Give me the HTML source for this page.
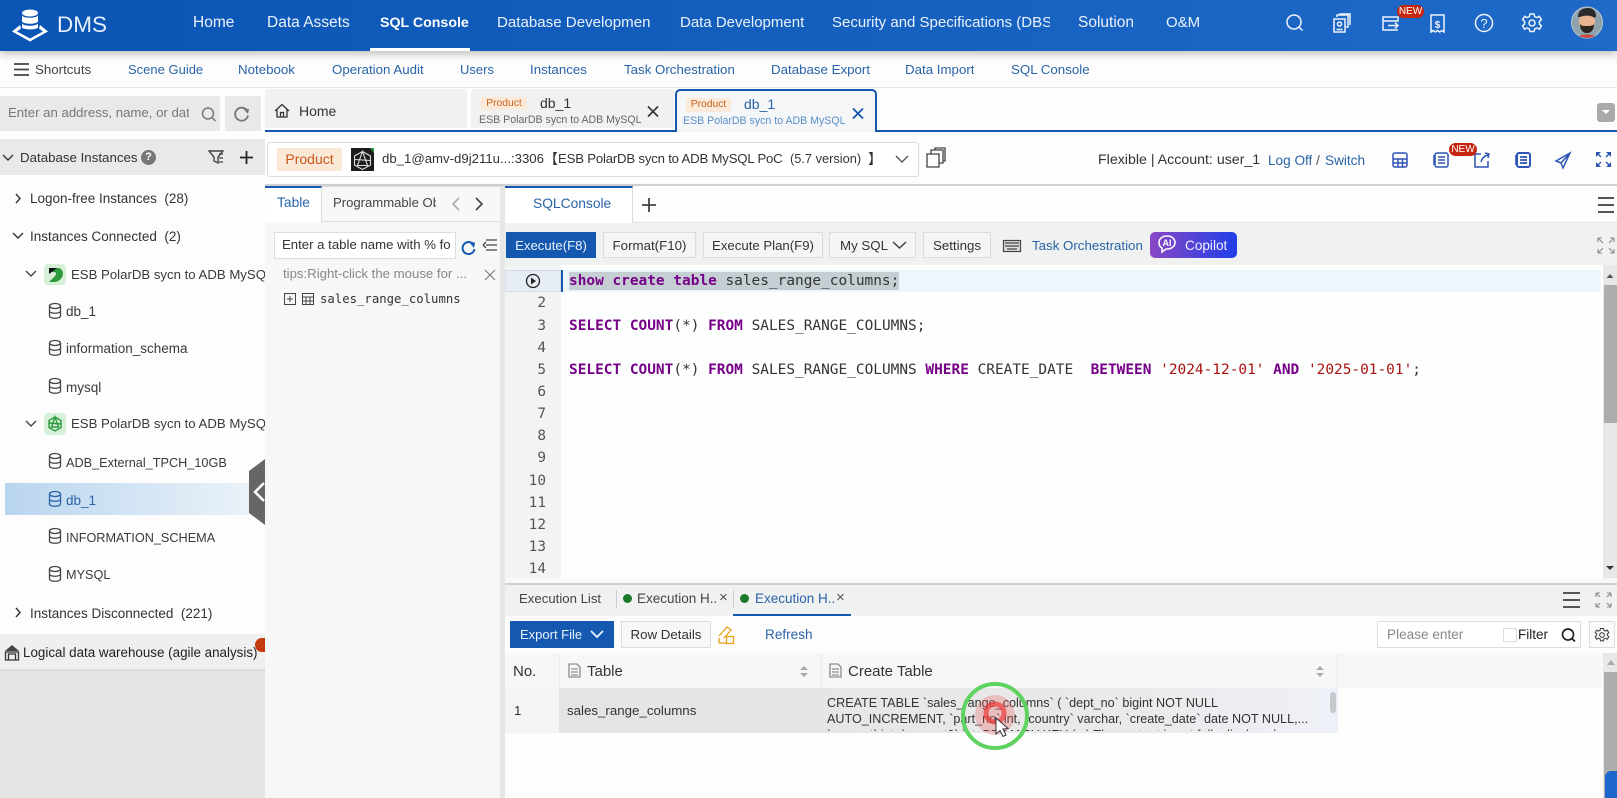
<!DOCTYPE html>
<html><head><meta charset="utf-8"><title>DMS</title>
<style>
html,body{margin:0;padding:0;width:1617px;height:798px;overflow:hidden;background:#fdfdfd;font-family:"Liberation Sans","Noto Sans CJK SC",sans-serif;color:#333}
.b{position:absolute}
.t{position:absolute;white-space:nowrap;line-height:20px;height:20px;font-size:14px;overflow:hidden}
.n{color:#eaf2fb;font-size:15.5px;top:13px}
.s{color:#2a64a8;font-size:13.3px;top:60px}
.r{font-size:13.5px;color:#3a3a3a}
.u{font-size:12.7px;color:#3a3a3a}
.btn{position:absolute;top:232px;height:24px;line-height:25px;background:#f5f5f5;border:1px solid #dcdcdc;font-size:13.3px;color:#333;text-align:center}
.ln{position:absolute;left:505px;width:41px;text-align:right;font:14.4px/22px "DejaVu Sans Mono",monospace;color:#555;height:22px}
.c{position:absolute;left:569px;white-space:pre;font:14.45px/22px "DejaVu Sans Mono",monospace;color:#333;height:22px}
.c b{color:#770088;font-weight:bold}.c i{font-style:normal;color:#a11}
</style></head><body>

<!-- header -->
<div class="b" style="left:0;top:0;width:1617px;height:51px;background:linear-gradient(90deg,#0a55b4,#1f69c8);box-shadow:0 3px 8px rgba(0,0,0,.25)"></div>
<div class="b" style="left:370px;top:48px;width:100px;height:3px;background:#fff"></div>
<div class="t" style="left:57px;top:12px;color:#e6effa;font-size:22.5px;line-height:25px;height:25px">DMS</div>
<div class="t n" style="left:193px">Home</div>
<div class="t n" style="left:267px">Data Assets</div>
<div class="t n" style="left:380px;font-weight:bold;color:#fff;font-size:14.2px">SQL Console</div>
<div class="t n" style="left:497px;width:155px;font-size:15.1px">Database Developmen</div>
<div class="t n" style="left:680px;width:126px;font-size:15px">Data Development</div>
<div class="t n" style="left:832px;width:218px;font-size:15px">Security and Specifications (DBS</div>
<div class="t n" style="left:1078px">Solution</div>
<div class="t n" style="left:1166px;font-size:15px">O&amp;M</div>
<div class="b" style="left:1397px;top:5px;width:27px;height:13px;background:#c5260f;border-radius:7px;color:#fff;font-size:10px;line-height:13px;text-align:center">NEW</div>

<!-- subnav -->
<div class="b" style="left:0;top:87px;width:1617px;height:1px;background:#e6e6e6"></div>
<div class="t" style="left:35px;top:60px;font-size:13.3px;color:#444">Shortcuts</div>
<div class="t s" style="left:128px;font-size:13px">Scene Guide</div>
<div class="t s" style="left:238px">Notebook</div>
<div class="t s" style="left:332px">Operation Audit</div>
<div class="t s" style="left:460px;font-size:13px">Users</div>
<div class="t s" style="left:530px">Instances</div>
<div class="t s" style="left:624px">Task Orchestration</div>
<div class="t s" style="left:771px">Database Export</div>
<div class="t s" style="left:905px">Data Import</div>
<div class="t s" style="left:1011px">SQL Console</div>

<!-- left search -->
<div class="b" style="left:0;top:96px;width:220px;height:35px;background:#e9e9e9"></div>
<div class="t" style="left:8px;top:103px;width:181px;color:#777;font-size:13.2px">Enter an address, name, or data</div>
<div class="b" style="left:225px;top:96px;width:36px;height:35px;background:#e9e9e9"></div>

<!-- doc tabs -->
<div class="b" style="left:265px;top:89px;width:202px;height:39px;background:#f1f1f1;border-radius:4px 4px 0 0"></div>
<div class="t" style="left:299px;top:101px;font-size:14px;color:#333">Home</div>
<div class="b" style="left:471px;top:89px;width:203px;height:39px;background:#f1f1f1;border-radius:4px 4px 0 0"></div>
<div class="b" style="left:481px;top:97px;width:46px;height:13px;background:#fbead9;color:#c9621d;font-size:10.3px;line-height:13px;text-align:center">Product</div>
<div class="t" style="left:540px;top:93px;font-size:14px;color:#333">db_1</div>
<div class="t" style="left:479px;top:110px;width:162px;font-size:10.6px;color:#666">ESB PolarDB sycn to ADB MySQL PoC</div>
<div class="b" style="left:265px;top:130px;width:1352px;height:2px;background:#1558b0"></div>
<div class="b" style="left:675px;top:89px;width:198px;height:41px;background:#f4f6f7;border:2px solid #1558b0;border-bottom:none;border-radius:5px 5px 0 0"></div>
<div class="b" style="left:686px;top:98px;width:45px;height:14px;background:#fbead9;color:#c9621d;font-size:10.3px;line-height:14px;text-align:center">Product</div>
<div class="t" style="left:744px;top:94px;font-size:14px;color:#2a64a8">db_1</div>
<div class="t" style="left:683px;top:111px;width:162px;font-size:10.6px;color:#5b8fca">ESB PolarDB sycn to ADB MySQL PoC</div>
<div class="b" style="left:1597px;top:103px;width:18px;height:19px;background:#aaa;border-radius:3px"></div>

<!-- Sidebar -->
<div class="b" style="left:0;top:139px;width:265px;height:36px;background:#e9e9e9"></div>
<div class="t" style="left:20px;top:148px;font-size:13.3px;color:#333">Database Instances</div>
<div class="b" style="left:141px;top:150px;width:15px;height:15px;border-radius:50%;background:#777;color:#fff;font-size:11px;line-height:15px;text-align:center;font-weight:bold">?</div>
<div class="t r" style="left:30px;top:189px;color:#333">Logon-free Instances&nbsp; (28)</div>
<div class="t r" style="left:30px;top:227px;color:#333">Instances Connected&nbsp; (2)</div>
<div class="t r" style="left:71px;top:265px;width:194px;font-size:13.2px">ESB PolarDB sycn to ADB MySQL PoC</div>
<div class="t r" style="left:66px;top:302px">db_1</div>
<div class="t r" style="left:66px;top:339px">information_schema</div>
<div class="t r" style="left:66px;top:378px">mysql</div>
<div class="t r" style="left:71px;top:414px;width:194px;font-size:13.2px">ESB PolarDB sycn to ADB MySQL PoC</div>
<div class="t u" style="left:66px;top:453px">ADB_External_TPCH_10GB</div>
<div class="b" style="left:5px;top:483px;width:244px;height:32px;background:linear-gradient(90deg,#b9d5ee,#eaf2f9)"></div>
<div class="t r" style="left:66px;top:491px;color:#2a64a8">db_1</div>
<div class="t u" style="left:66px;top:528px">INFORMATION_SCHEMA</div>
<div class="t u" style="left:66px;top:565px">MYSQL</div>
<div class="t r" style="left:30px;top:604px;color:#333">Instances Disconnected&nbsp; (221)</div>
<div class="b" style="left:0;top:634px;width:265px;height:37px;background:#efefef;border-bottom:2px solid #dcdcdc;box-sizing:border-box"></div>
<div class="b" style="left:0;top:671px;width:265px;height:127px;background:#e6e6e6"></div>
<div class="t" style="left:23px;top:643px;font-size:13.4px;color:#222">Logical data warehouse (agile analysis)</div>
<div class="b" style="left:255px;top:638px;width:10px;height:14px;background:#c5390f;border-radius:8px 0 0 8px"></div>

<!-- Context row -->
<div class="b" style="left:265px;top:132px;width:1352px;height:52px;background:#fdfdfd"></div>
<div class="b" style="left:267px;top:142px;width:652px;height:35px;background:#fff;border:1px solid #dcdcdc;border-radius:3px;box-sizing:border-box"></div>
<div class="b" style="left:277px;top:148px;width:65px;height:23px;background:#fbe9d7;color:#c9571a;font-size:14px;line-height:23px;text-align:center">Product</div>
<div class="b" style="left:351px;top:148px;width:23px;height:23px;background:#1c1c1c"></div>
<div class="t" style="left:382px;top:149px;font-size:13.2px;color:#333">db_1@amv-d9j211u...:3306</div>
<div class="t" style="left:544px;top:149px;font-size:14px;color:#333;font-family:'Noto Sans CJK SC',sans-serif">【</div>
<div class="t" style="left:558px;top:149px;font-size:13.2px;color:#333;letter-spacing:-.2px">ESB PolarDB sycn to ADB MySQL PoC</div>
<div class="t" style="left:790px;top:149px;font-size:12.8px;color:#333">(5.7 version)</div>
<div class="t" style="left:868px;top:149px;font-size:14px;color:#333;font-family:'Noto Sans CJK SC',sans-serif">】</div>
<div class="t" style="left:1098px;top:150px;font-size:14.2px;color:#333">Flexible | Account: user_1</div>
<div class="t" style="left:1268px;top:151px;font-size:13.6px;color:#2a64a8">Log Off</div>
<div class="t" style="left:1316px;top:150px;font-size:14px;color:#555">/</div>
<div class="t" style="left:1325px;top:151px;font-size:13.6px;color:#2a64a8">Switch</div>
<div class="b" style="left:1449px;top:143px;width:28px;height:13px;background:#c5260f;border-radius:7px;color:#fff;font-size:10px;line-height:13px;text-align:center;z-index:2">NEW</div>
<div class="b" style="left:265px;top:184px;width:1352px;height:2px;background:#cfcfcf"></div>

<!-- Middle panel -->
<div class="b" style="left:265px;top:186px;width:235px;height:612px;background:#f6f7f7"></div>
<div class="b" style="left:500px;top:186px;width:5px;height:612px;background:#e6e8e8"></div>
<div class="b" style="left:265px;top:186px;width:56px;height:34px;background:#fff;border-top:2px solid #1558b0;border-right:1px solid #ddd"></div>
<div class="b" style="left:322px;top:186px;width:178px;height:36px;background:#f8f8f8;border-top:1px solid #ddd;box-sizing:border-box"></div>
<div class="t" style="left:277px;top:193px;font-size:13.8px;color:#2a64a8">Table</div>
<div class="t" style="left:333px;top:193px;font-size:13.1px;color:#444;width:103px">Programmable Objects</div>
<div class="b" style="left:322px;top:221px;width:178px;height:1px;background:#ddd"></div>
<div class="b" style="left:274px;top:232px;width:182px;height:27px;background:#fff;border:1px solid #ddd;box-sizing:border-box"></div>
<div class="t" style="left:282px;top:235px;width:168px;font-size:13.2px;color:#333">Enter a table name with % for</div>
<div class="t" style="left:283px;top:264px;width:185px;font-size:13.2px;color:#888">tips:Right-click the mouse for ...</div>
<div class="t" style="left:320px;top:289px;font:12.3px/20px 'DejaVu Sans Mono',monospace;color:#333">sales_range_columns</div>

<!-- SQL tabs -->
<div class="b" style="left:505px;top:186px;width:1112px;height:37px;background:#fdfdfd"></div>
<div class="b" style="left:505px;top:186px;width:127px;height:35px;background:#fff;border-top:2px solid #1558b0;border-right:1px solid #ddd"></div>
<div class="t" style="left:533px;top:194px;font-size:13.8px;color:#2a64a8">SQLConsole</div>
<div class="b" style="left:633px;top:222px;width:984px;height:1px;background:#e4e4e4"></div>
<div class="b" style="left:505px;top:223px;width:1112px;height:42px;background:#f0f1f1"></div>
<div class="b" style="left:506px;top:232px;width:90px;height:26px;background:#1558b0;color:#eaf2fb;font-size:13.2px;line-height:27px;text-align:center">Execute(F8)</div>
<div class="btn" style="left:603px;width:91px">Format(F10)</div>
<div class="btn" style="left:703px;width:118px;font-size:13.2px">Execute Plan(F9)</div>
<div class="btn" style="left:829px;width:85px;text-align:left;text-indent:10px">My SQL</div>
<div class="btn" style="left:923px;width:66px">Settings</div>
<div class="t" style="left:1032px;top:236px;font-size:13.3px;color:#2a64a8">Task Orchestration</div>
<div class="b" style="left:1150px;top:232px;width:87px;height:26px;background:linear-gradient(90deg,#8a47c5,#1f3fe8);border-radius:5px"></div>
<div class="t" style="left:1185px;top:236px;font-size:13.6px;color:#f0f0ff">Copilot</div>

<!-- Editor -->
<div class="b" style="left:505px;top:265px;width:1098px;height:313px;background:#fdfefe"></div>
<div class="b" style="left:505px;top:265px;width:56px;height:313px;background:#f2f3f3"></div>
<div class="b" style="left:505px;top:270px;width:56px;height:22px;background:#e6edf5;border:1px solid #d6dbe3;box-sizing:border-box"></div>
<div class="b" style="left:561px;top:270px;width:2px;height:22px;background:#1558b0"></div>
<div class="b" style="left:563px;top:270px;width:1038px;height:22px;background:#edf6fb"></div>
<div class="b" style="left:569px;top:272px;width:330px;height:18px;background:#c4ced3"></div>
<div class="ln" style="top:292px">2</div><div class="ln" style="top:315px">3</div><div class="ln" style="top:337px">4</div><div class="ln" style="top:359px">5</div><div class="ln" style="top:381px">6</div><div class="ln" style="top:403px">7</div><div class="ln" style="top:425px">8</div><div class="ln" style="top:447px">9</div><div class="ln" style="top:470px">10</div><div class="ln" style="top:492px">11</div><div class="ln" style="top:514px">12</div><div class="ln" style="top:536px">13</div><div class="ln" style="top:558px">14</div>
<div class="c" style="top:270px"><b>show create table</b> sales_range_columns;</div>
<div class="c" style="top:315px"><b>SELECT COUNT</b>(*) <b>FROM</b> SALES_RANGE_COLUMNS;</div>
<div class="c" style="top:359px"><b>SELECT COUNT</b>(*) <b>FROM</b> SALES_RANGE_COLUMNS <b>WHERE</b> CREATE_DATE  <b>BETWEEN</b> <i>'2024-12-01'</i> <b>AND</b> <i>'2025-01-01'</i>;</div>
<div class="b" style="left:1603px;top:265px;width:14px;height:313px;background:#e8e8e8"></div>
<div class="b" style="left:1604px;top:285px;width:13px;height:138px;background:#adadad"></div>
<div class="b" style="left:505px;top:578px;width:1112px;height:5px;background:#f8f8f8"></div>
<div class="b" style="left:505px;top:583px;width:1112px;height:2px;background:#cfcfcf"></div>

<!-- Result panel -->
<div class="b" style="left:505px;top:585px;width:1112px;height:31px;background:#f0f1f1"></div>
<div class="t" style="left:519px;top:589px;font-size:13.2px;color:#444">Execution List</div>
<div class="b" style="left:616px;top:590px;width:1px;height:18px;background:#ccc"></div>
<div class="b" style="left:623px;top:594px;width:9px;height:9px;border-radius:50%;background:#1a7a2a"></div>
<div class="t" style="left:637px;top:589px;font-size:13.5px;color:#444;width:80px">Execution H...</div>
<div class="t" style="left:719px;top:588px;font-size:15px;color:#555">×</div>
<div class="b" style="left:733px;top:590px;width:1px;height:18px;background:#ccc"></div>
<div class="b" style="left:740px;top:594px;width:9px;height:9px;border-radius:50%;background:#1a7a2a"></div>
<div class="t" style="left:755px;top:589px;font-size:13.5px;color:#2a64a8;width:80px">Execution H...</div>
<div class="t" style="left:836px;top:588px;font-size:15px;color:#555">×</div>
<div class="b" style="left:733px;top:614px;width:118px;height:2px;background:#1558b0"></div>

<div class="b" style="left:510px;top:621px;width:104px;height:27px;background:#1558b0"></div>
<div class="t" style="left:520px;top:625px;font-size:13px;color:#eaf2fb">Export File</div>
<div class="b" style="left:621px;top:621px;width:90px;height:27px;background:#f8f8f8;border:1px solid #ddd;box-sizing:border-box;font-size:13.3px;line-height:26px;text-align:center;color:#333">Row Details</div>
<div class="t" style="left:765px;top:625px;font-size:13.6px;color:#2a64a8">Refresh</div>
<div class="b" style="left:1377px;top:621px;width:204px;height:27px;background:#fff;border:1px solid #ddd;box-sizing:border-box"></div>
<div class="t" style="left:1387px;top:625px;font-size:13.6px;color:#888">Please enter</div>
<div class="b" style="left:1503px;top:628px;width:14px;height:14px;background:#fff;border:1px solid #ddd;box-sizing:border-box"></div>
<div class="t" style="left:1518px;top:625px;font-size:13.5px;color:#222">Filter</div>
<div class="b" style="left:1589px;top:621px;width:26px;height:27px;background:#fafafa;border:1px solid #ddd;box-sizing:border-box"></div>

<div class="b" style="left:505px;top:653px;width:1098px;height:35px;background:#f7f7f7"></div>
<div class="b" style="left:559px;top:653px;width:1px;height:35px;background:#ececec"></div>
<div class="b" style="left:821px;top:653px;width:1px;height:35px;background:#ececec"></div>
<div class="b" style="left:1337px;top:653px;width:1px;height:35px;background:#ececec"></div>
<div class="t" style="left:513px;top:662px;font-size:15px;color:#333">No.</div>
<div class="t" style="left:587px;top:662px;font-size:15px;color:#333">Table</div>
<div class="t" style="left:848px;top:662px;font-size:15px;color:#333">Create Table</div>
<div class="b" style="left:505px;top:688px;width:54px;height:45px;background:#f4f4f4"></div>
<div class="b" style="left:559px;top:688px;width:779px;height:45px;background:linear-gradient(90deg,#e3e4e4,#e9e9e9 70%,#eff1f8)"></div>
<div class="t" style="left:514px;top:701px;font-size:13.3px;color:#333">1</div>
<div class="t" style="left:567px;top:701px;font-size:13.3px;color:#333">sales_range_columns</div>
<div class="b" style="left:827px;top:695px;width:490px;height:36px;overflow:hidden;font-size:12.6px;line-height:16px;color:#333;white-space:nowrap">CREATE TABLE `sales_range_columns` ( `dept_no` bigint NOT NULL<br>AUTO_INCREMENT, `part_no` int, `country` varchar, `create_date` date NOT NULL,...<br>`amount` int, `amount2` int, PRIMARY KEY (...) The content is not fully displayed...</div>
<div class="b" style="left:1330px;top:692px;width:6px;height:21px;background:#c5c8cc;border-radius:3px"></div>
<div class="b" style="left:1603px;top:653px;width:14px;height:145px;background:#e8e8e8"></div>
<div class="b" style="left:1604px;top:672px;width:13px;height:126px;background:#adadad"></div>
<div class="b" style="left:1605px;top:771px;width:12px;height:27px;background:#1c66cc;border-radius:6px 0 0 0"></div>

<!-- Icons overlay -->
<svg class="b" style="left:0;top:0;z-index:1" width="1617" height="798" viewBox="0 0 1617 798" fill="none">
<!-- logo -->
<g fill="#fff">
<ellipse cx="30" cy="13" rx="8" ry="3.500"/>
<path d="M22 15.500c2 3 14 3 16 0v6c-2 3-14 3-16 0zM22 23.500c2 3 14 3 16 0v4c-2 2.500-14 2.500-16 0z"/>
<path d="M20 25l-8 6.500 18 10 18-10-8-6.500-1 3.500 4 3-13 7-13-7 4-3z"/>
</g>
<!-- header icons -->
<g stroke="#eef4fb" stroke-width="1.500">
<circle cx="1294" cy="22" r="7"/><path d="M1299 27l3.500 3.500"/>
<rect x="1334" y="19" width="11" height="13"/><path d="M1337 17v-2h11v12h-2M1340 15.500v-1.500h10v11"/><circle cx="1339.500" cy="24" r="2"/><path d="M1336.500 29.500h6"/>
<path d="M1383 17h15v4h-15zM1383 17v13h15M1388 25.500h10M1395 22.500l3 3-3 3"/>
<path d="M1431 15h13v17l-2.200-1.500-2.100 1.500-2.200-1.500-2.200 1.500-2.100-1.500-2.200 1.500z"/>
<circle cx="1484" cy="23" r="8.500"/>
<circle cx="1532" cy="23" r="3"/>
<path d="M1530 14h4l.7 2.600 2.300 1 2.400-1.300 2 3.400-2 1.800v2.500l2 1.800-2 3.400-2.400-1.300-2.300 1-.7 2.600h-4l-.7-2.600-2.300-1-2.400 1.300-2-3.400 2-1.800v-2.500l-2-1.800 2-3.400 2.400 1.300 2.300-1z"/>
</g>
<text x="1437.500" y="28" fill="#eef4fb" font-size="10" font-weight="bold" text-anchor="middle" font-family="Liberation Sans">$</text>
<text x="1484" y="28" fill="#eef4fb" font-size="13" text-anchor="middle" font-family="Liberation Sans">?</text>
<!-- avatar -->
<circle cx="1587" cy="22.500" r="15.500" fill="#8fa3ad" stroke="#b9c6cf" stroke-width="1"/>
<ellipse cx="1587" cy="21" rx="8" ry="9" fill="#e6b48e"/>
<path d="M1578 17c0-6 4-9 10-9 5 0 8 3 8 8l-1 2c-4-3-10-3-15-1z" fill="#2a2a2a"/>
<path d="M1580 24c1 2 4 2 7 2s6 0 7-2c0 6-3 9-7 9s-7-3-7-9z" fill="#2b241f"/>
<path d="M1579 36c4-2 12-2 16 0-4 2.500-12 2.500-16 0z" fill="#c9453f"/>
<!-- shortcuts hamburger -->
<path d="M14 64h15M14 69.500h15M14 75h15" stroke="#444" stroke-width="1.800"/>
<!-- left search icons -->
<circle cx="208" cy="113.500" r="5.500" stroke="#777" stroke-width="1.500"/><path d="M212 117.500l3.500 3.500" stroke="#777" stroke-width="1.500"/>
<path d="M247 110.500a6.500 6.500 0 1 0 1 5" stroke="#777" stroke-width="1.800"/><path d="M243 108.500l6 .5-1 5z" fill="#777"/>
<!-- home icon -->
<path d="M275 111l7-6.500 7 6.500M277 109.500v7.500h10v-7.500M280.500 117v-4.500h3v4.500" stroke="#333" stroke-width="1.300"/>
<!-- tab x -->
<path d="M648 106.500l10 10M658 106.500l-10 10" stroke="#333" stroke-width="1.600"/>
<path d="M853 108.500l10 10M863 108.500l-10 10" stroke="#1558b0" stroke-width="1.800"/>
<path d="M1602 110h8l-4 4z" fill="#fff"/>
<!-- sidebar icons -->
<path d="M3 155l5 5 5-5" stroke="#333" stroke-width="1.400"/>
<path d="M16 194l4 4.500-4 4.500" stroke="#333" stroke-width="1.400"/>
<path d="M209 151h14l-5 6v6l-4-2v-4z" stroke="#444" stroke-width="1.400"/><path d="M219 154h4M219 158h4M219 162h4" stroke="#444" stroke-width="1.200"/>
<path d="M246.500 151v13M240 157.500h13" stroke="#222" stroke-width="1.800"/>
<path d="M13 233l5 5 5-5" stroke="#333" stroke-width="1.400"/>
<path d="M26 271l5 5 5-5M26 421l5 5 5-5" stroke="#444" stroke-width="1.400"/>
<path d="M16 608l4 4.500-4 4.500" stroke="#333" stroke-width="1.400"/>
<rect x="44" y="264" width="22" height="21" rx="4" fill="#d8efd8"/>
<path d="M49 268h9c3 0 5 3 5 5 0 6-5 9-9 9h-5l6-6c2-2 1-4-1-4h-5z" fill="#2c9a3c"/><path d="M49 268h8l-8 6z" fill="#111"/>
<rect x="44" y="413" width="22" height="22" rx="4" fill="#d8efd8"/>
<path d="M55 417l6 3.500v7l-6 3.500-6-3.500v-7zM55 417l-3.500 10h7zM49 423l12 1" stroke="#2c9a3c" stroke-width="1.400"/>
<g stroke="#444" stroke-width="1.300">
<ellipse cx="55" cy="306" rx="5.500" ry="2.500"/><path d="M49.500 306v10c0 3 11 3 11 0v-10M49.500 311c0 3 11 3 11 0"/>
<ellipse cx="55" cy="343" rx="5.500" ry="2.500"/><path d="M49.500 343v10c0 3 11 3 11 0v-10M49.500 348c0 3 11 3 11 0"/>
<ellipse cx="55" cy="381" rx="5.500" ry="2.500"/><path d="M49.500 381v10c0 3 11 3 11 0v-10M49.500 386c0 3 11 3 11 0"/>
<ellipse cx="55" cy="456" rx="5.500" ry="2.500"/><path d="M49.500 456v10c0 3 11 3 11 0v-10M49.500 461c0 3 11 3 11 0"/>
<ellipse cx="55" cy="531" rx="5.500" ry="2.500"/><path d="M49.500 531v10c0 3 11 3 11 0v-10M49.500 536c0 3 11 3 11 0"/>
<ellipse cx="55" cy="569" rx="5.500" ry="2.500"/><path d="M49.500 569v10c0 3 11 3 11 0v-10M49.500 574c0 3 11 3 11 0"/>
</g>
<g stroke="#2a64a8" stroke-width="1.300"><ellipse cx="55" cy="494" rx="5.500" ry="2.500"/><path d="M49.500 494v10c0 3 11 3 11 0v-10M49.500 499c0 3 11 3 11 0"/></g>
<!-- collapse handle -->
<path d="M265 459v66l-16-12v-42z" fill="#666"/><path d="M264 483l-9 9 9 9" stroke="#fff" stroke-width="2.500"/>
<!-- warehouse icon -->
<path d="M5.500 652h13v8h-13zM8.500 654h7v6h-7z" stroke="#333" stroke-width="1.300"/><path d="M5 651l7-6 7 6z" fill="#444"/>
<!-- context icons -->
<path d="M362.500 151.500l8 4.500v9l-8 4.500-8-4.500v-9zM362.500 151.500l-5 14h10zM355 159.500l15 1" stroke="#ddd" stroke-width="1.100"/>
<path d="M370 148h4v5z" fill="#2c9a3c"/>
<path d="M896 156l6 6 6-6" stroke="#555" stroke-width="1.400"/>
<path d="M927 154h12v13h-12zM931 154v-4h12v13h-4M935 150v-2h10v13h-2" stroke="#444" stroke-width="1.300"/>
<g stroke="#2f55b5" stroke-width="1.500">
<rect x="1393" y="153" width="14" height="14" rx="2"/><path d="M1393 159h14M1393 163h14M1398 159v8M1402.500 159v8"/>
<rect x="1435" y="153" width="13" height="14" rx="2"/><path d="M1438 157h7M1438 160h7M1438 163h7M1434 155v10"/>
<path d="M1481 154h-6v13h13v-6M1481 162c1-4 3-6 7-7M1485 153l4 1-1 4"/>
<rect x="1517" y="153" width="13" height="14" rx="2" stroke-width="2"/><path d="M1520 157h7M1520 160h7M1520 163h7M1516 155v10" stroke-width="1.700"/>
<path d="M1570 153l-14 8 5 2 2 5 7-15zM1561 163l9-10"/>
</g>
<g fill="#2f55b5"><path d="M1596 152h5l-5 5zM1611 152h-5l5 5zM1596 167h5l-5-5zM1611 167h-5l5-5z"/></g>
<path d="M1598 154l3 3M1609 154l-3 3M1598 165l3-3M1609 165l-3-3" stroke="#2f55b5" stroke-width="1.400"/>
<!-- mid tabs -->
<path d="M459 198l-6 6 6 6" stroke="#aaa" stroke-width="1.600"/><path d="M476 198l6 6-6 6" stroke="#444" stroke-width="1.600"/>
<path d="M649 198v14M642 205h14" stroke="#444" stroke-width="1.800"/>
<path d="M1598 198h16M1598 205h16M1598 212h16" stroke="#555" stroke-width="2"/>
<!-- table refresh/list -->
<path d="M473 244a6 6 0 1 0 1.500 5" stroke="#1558b0" stroke-width="2"/><path d="M469 242l6 .5-1 5.500z" fill="#1558b0"/>
<path d="M486 240h11M486 245h11M486 250h11M483 245l3-3M483 245l3 3" stroke="#444" stroke-width="1.300"/>
<path d="M485 270l10 10M495 270l-10 10" stroke="#777" stroke-width="1.100"/>
<!-- tree -->
<rect x="284.500" y="293.500" width="11" height="11" stroke="#444"/><path d="M287 299h6M290 296v6" stroke="#444"/>
<rect x="302.500" y="293.500" width="11" height="11" stroke="#444"/><path d="M302.500 297h11M302.500 301h11M306 297v7M310 297v7" stroke="#444"/>
<!-- toolbar icons -->
<path d="M893 242l6.500 6 6.500-6" stroke="#444" stroke-width="1.500"/>
<rect x="1003.500" y="240.500" width="17" height="11" stroke="#444" stroke-width="1.200" fill="#ddd"/><path d="M1005 243h14M1005 246h14M1007 249h10" stroke="#444" stroke-width="1.200"/>
<path d="M1167 236c5 0 8 3 8 6.500s-3 6.500-8 6.500h-1l-4 3v-4c-2-1-3-3-3-5.500 0-3.500 3-6.500 8-6.500z" stroke="#fff" stroke-width="1.600"/>
<text x="1167" y="246" fill="#fff" font-size="9" font-weight="bold" text-anchor="middle" font-family="Liberation Sans">AI</text>
<path d="M1598 238h4M1598 238l5 5M1598 238v4M1614 238h-4M1614 238l-5 5M1614 238v4M1598 253h4M1598 253l5-5M1598 253v-4M1614 253h-4M1614 253l-5-5M1614 253v-4" stroke="#888" stroke-width="1.100"/>
<!-- run gutter -->
<circle cx="533" cy="281" r="6.500" stroke="#222" stroke-width="1.300"/><path d="M531 277.500v7l5-3.500z" fill="#222"/>
<path d="M1610 274l3.500 4h-7z" fill="#555"/><path d="M1606 566h8l-4 4z" fill="#333"/>
<!-- result icons -->
<path d="M1563 593h17M1563 600h17M1563 607h17" stroke="#555" stroke-width="2"/>
<path d="M1596 593h4M1596 593l4 4M1596 593v4M1611 593h-4M1611 593l-4 4M1611 593v4M1596 607h4M1596 607l4-4M1596 607v-4M1611 607h-4M1611 607l-4-4M1611 607v-4" stroke="#888" stroke-width="1.100"/>
<path d="M591 631l6 6 6-6" stroke="#eaf2fb" stroke-width="1.800"/>
<path d="M719 636l8-9 4 3-7 8M719 643v-5M719 643h7" stroke="#e8a317" stroke-width="1.300"/><rect x="726.500" y="636.500" width="7" height="7" stroke="#e8a317" stroke-width="1.300"/>
<circle cx="1568" cy="634.500" r="5.500" stroke="#222" stroke-width="1.700"/><path d="M1572 638.500l3 3" stroke="#222" stroke-width="1.700"/>
<circle cx="1602" cy="635" r="2.300" stroke="#444" stroke-width="1.100"/>
<path d="M1600.500 628.500h3l.4 1.800 1.700.8 1.700-1 1.500 2.500-1.400 1.300v1.500l1.400 1.300-1.500 2.500-1.700-1-1.700.8-.4 1.800h-3l-.4-1.800-1.700-.8-1.700 1-1.500-2.500 1.400-1.300v-1.500l-1.400-1.300 1.500-2.500 1.700 1 1.700-.8z" stroke="#444" stroke-width="1.100"/>
<path d="M569 664h8l3 3v10h-11zM571 669h7M571 672h7M571 675h7" stroke="#777" stroke-width="1.100"/>
<path d="M830 664h8l3 3v10h-11zM832 669h7M832 672h7M832 675h7" stroke="#777" stroke-width="1.100"/>
<path d="M804 666l-4 4h8zM804 677l-4-4h8z" fill="#aaa"/>
<path d="M1320 666l-4 4h8zM1320 677l-4-4h8z" fill="#aaa"/>
<path d="M1611 660l-4 5h8z" fill="#aaa"/>
<!-- click marker -->
<circle cx="995" cy="715" r="20" fill="#e85c5c" opacity=".3"/>
<circle cx="995" cy="716" r="32" stroke="#5fd35f" stroke-width="4"/>
<circle cx="995" cy="713" r="9" stroke="#ee3a3a" stroke-width="5" opacity=".7"/>
<path d="M996 718v16l4-3.500 3 6 3-1.500-3-6 5-.5z" fill="#fff" stroke="#333" stroke-width="1"/>
</svg>
</body></html>
